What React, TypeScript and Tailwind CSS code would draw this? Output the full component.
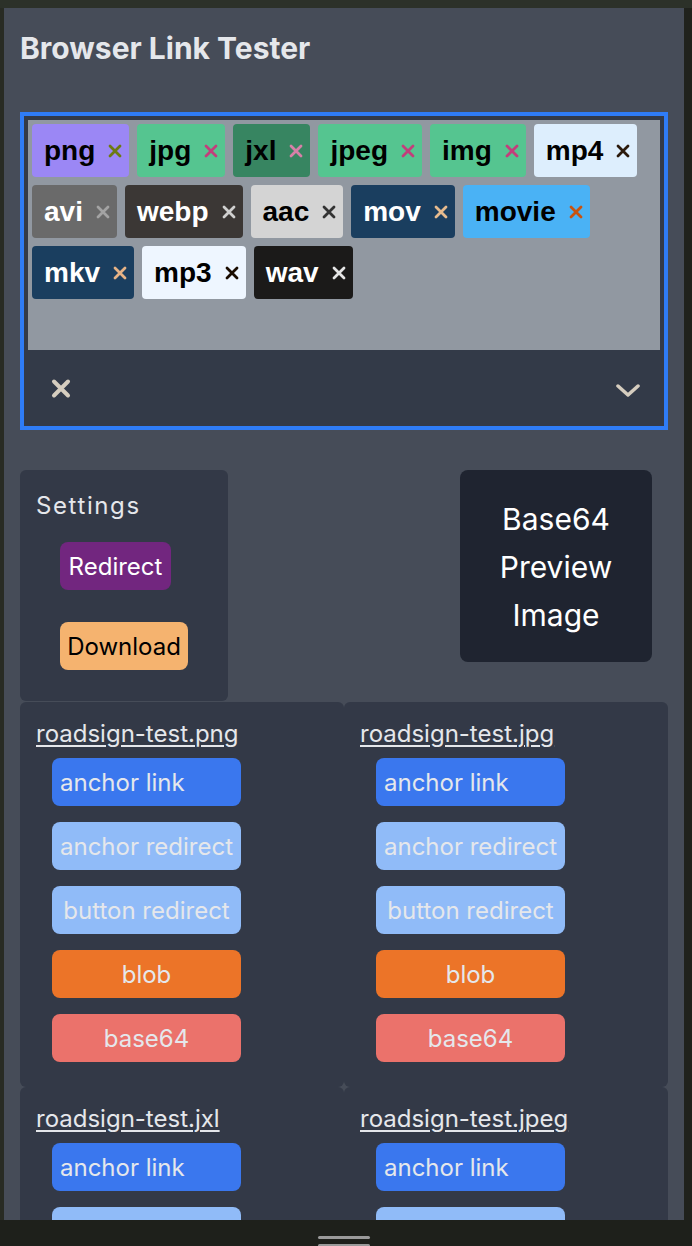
import React from "react";

type Tag = { t: string; cls: string; x: string };

const tags: Tag[] = [
  { t: "png", cls: "bg-[#9b87f5] text-black", x: "#6d7a12" },
  { t: "jpg", cls: "bg-[#55c590] text-black", x: "#c23e7b" },
  { t: "jxl", cls: "bg-[#378561] text-black", x: "#d780a8" },
  { t: "jpeg", cls: "bg-[#55c590] text-black", x: "#c23e7b" },
  { t: "img", cls: "bg-[#55c590] text-black", x: "#c23e7b" },
  { t: "mp4", cls: "bg-[#ddeefd] text-black", x: "#2b1a0c" },
  { t: "avi", cls: "bg-[#6a6a6a] text-white", x: "#a3a3a3" },
  { t: "webp", cls: "bg-[#3b3735] text-white", x: "#d0d0d0" },
  { t: "aac", cls: "bg-[#d4d4d4] text-black", x: "#333333" },
  { t: "mov", cls: "bg-[#1a3e5f] text-white", x: "#e6bb8e" },
  { t: "movie", cls: "bg-[#4ab2f5] text-black", x: "#c9530f" },
  { t: "mkv", cls: "bg-[#1a3e5f] text-white", x: "#e6b386" },
  { t: "mp3", cls: "bg-[#eef6ff] text-black", x: "#1a0c00" },
  { t: "wav", cls: "bg-[#1b1a19] text-white", x: "#e5e5e5" },
];

const files = [
  "roadsign-test.png",
  "roadsign-test.jpg",
  "roadsign-test.jxl",
  "roadsign-test.jpeg",
];

function TagChip({ tag }: { tag: Tag }) {
  return (
    <div
      className={`flex h-[53px] items-center rounded-[4px] pl-3 pr-[7px] text-[28px] font-bold ${tag.cls}`}
      style={{ fontFamily: '"Liberation Sans", Arial, sans-serif' }}
    >
      <span>{tag.t}</span>
      <svg className="ml-[13px]" width="14" height="14" viewBox="0 0 14 14">
        <path d="M2 2 L12 12 M12 2 L2 12" stroke={tag.x} strokeWidth="2.8" strokeLinecap="round" />
      </svg>
    </div>
  );
}

function FileCard({ name }: { name: string }) {
  return (
    <div className="h-[385px] rounded-md bg-[#333947] pl-4 pt-[16px]">
      <div className="text-2xl leading-8 text-[#e5e7eb] underline underline-offset-[3px] decoration-[1.5px]">
        {name}
      </div>
      <div className="ml-4 mt-[8px] flex w-[189px] flex-col gap-4 text-2xl text-[#e5e7eb]">
        <div className="flex h-12 items-center rounded-lg bg-[#3a77ee] pl-2 pt-[2px]">anchor link</div>
        <div className="flex h-12 items-center rounded-lg bg-[#90bbf8] pl-2 pt-[2px]">anchor redirect</div>
        <div className="flex h-12 items-center justify-center rounded-lg bg-[#90bbf8] pt-[2px]">button redirect</div>
        <div className="flex h-12 items-center justify-center rounded-lg bg-[#ec7428] pt-[2px]">blob</div>
        <div className="flex h-12 items-center justify-center rounded-lg bg-[#eb726b] pt-[2px]">base64</div>
      </div>
    </div>
  );
}

export default function App() {
  return (
    <div
      className="flex h-[1246px] w-[692px] flex-col overflow-hidden bg-[#2c3129]"
      style={{ fontFamily: 'Inter, "Noto Sans", sans-serif' }}
    >
      <div className="h-[8px] shrink-0 bg-[#2c3129]" />
      <div className="flex h-[1212px] shrink-0">
        <div className="w-[4px] bg-[#282b24]" />
        <div className="h-[1212px] w-[680px] overflow-hidden bg-[#464c58] px-4 pt-[22px]">
          <h1 className="text-[30px] font-bold leading-[36px] text-[#e5e7eb]">Browser Link Tester</h1>

          <div className="mt-[46px] border-4 border-[#2f7cf6] bg-[#333a48] px-1 pt-1">
            <div className="h-[230px] bg-[#9198a1] p-1">
              <div className="flex flex-wrap gap-2">
                {tags.map((t) => (
                  <TagChip key={t.t} tag={t} />
                ))}
              </div>
            </div>
            <div className="flex h-[76px] items-center justify-between pl-[23px] pr-[20px]">
              <svg width="20" height="21" viewBox="0 0 20 21">
                <path d="M3 3.5 L17 17.5 M17 3.5 L3 17.5" stroke="#d6cdbf" strokeWidth="4" strokeLinecap="round" />
              </svg>
              <svg className="mt-[5px]" width="24" height="14" viewBox="0 0 24 14">
                <path d="M2 2 L12 11 L22 2" fill="none" stroke="#d6cdbf" strokeWidth="3.5" strokeLinecap="round" strokeLinejoin="round" />
              </svg>
            </div>
          </div>

          <div className="mt-10 flex items-start justify-between">
            <div className="h-[231px] w-[208px] rounded-md bg-[#333947] pl-4 pt-[20px]">
              <div className="text-2xl leading-8 tracking-[1.6px] text-[#e5e7eb]">Settings</div>
              <div className="ml-6 mt-[20px] flex flex-col items-start gap-8 text-2xl">
                <div className="flex h-12 w-[111px] items-center justify-center rounded-lg bg-[#72267f] pt-[2px] text-white">
                  Redirect
                </div>
                <div className="flex h-12 w-[128px] items-center justify-center rounded-lg bg-[#f5b36f] pt-[2px] text-black">
                  Download
                </div>
              </div>
            </div>
            <div className="mr-4 flex h-[192px] w-[192px] flex-col items-center justify-center rounded-lg bg-[#1f2430] pt-[2px] text-center text-[30px] leading-[48px] text-white">
              <span>Base64</span>
              <span>Preview</span>
              <span>Image</span>
            </div>
          </div>

          <div className="mt-px grid grid-cols-2">
            {files.map((f) => (
              <FileCard key={f} name={f} />
            ))}
          </div>
        </div>
        <div className="w-[8px] bg-[#20221d]" />
      </div>
      <div className="relative h-[26px] shrink-0 bg-[#1e201b]">
        <div className="absolute left-[318px] top-[16px] h-[3px] w-[52px] rounded-full bg-[#9a9a9a]" />
        <div className="absolute left-[318px] top-[24px] h-[3px] w-[52px] rounded-full bg-[#9a9a9a]" />
      </div>
    </div>
  );
}
